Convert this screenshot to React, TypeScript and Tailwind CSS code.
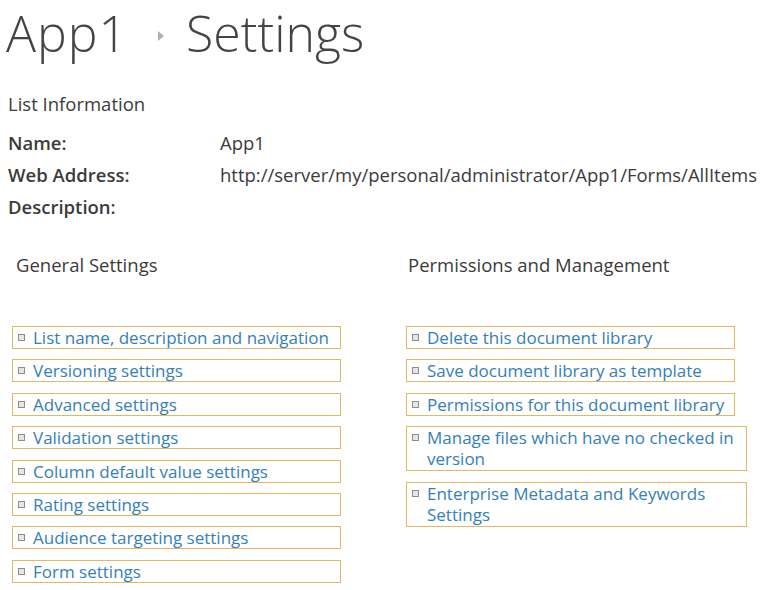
import React from 'react'

const general = [
  'List name, description and navigation',
  'Versioning settings',
  'Advanced settings',
  'Validation settings',
  'Column default value settings',
  'Rating settings',
  'Audience targeting settings',
  'Form settings',
]

const permissions: { text: string; wide?: boolean }[] = [
  { text: 'Delete this document library' },
  { text: 'Save document library as template' },
  { text: 'Permissions for this document library' },
  { text: 'Manage files which have no checked in version', wide: true },
  { text: 'Enterprise Metadata and Keywords Settings', wide: true },
]

const LinkBox: React.FC<{ text: string; className: string }> = ({ text, className }) => (
  <a
    href="#"
    className={`flex items-start border border-[#e2b865] pl-[5px] pr-1 text-[17px] leading-[21px] text-[#3580b8] ${className}`}
  >
    <span className="mt-[7px] mr-[8px] h-[7px] w-[7px] shrink-0 border border-[#8d8d8d] bg-[#e6e6e6]" />
    <span>{text}</span>
  </a>
)

export default function App() {
  return (
    <div className="h-[590px] w-[768px] overflow-hidden bg-white text-[#3b3b3b] font-['Open_Sans','Noto_Sans',sans-serif]">
      <div className="flex items-center pl-[6px] pt-[2px] text-[50px] font-light leading-[62px] text-[#444]">
        <span className="tracking-[1px]">App1</span>
        <span className="ml-[30px] mr-[22px] mt-[6px] h-0 w-0 border-y-[5px] border-l-[6px] border-y-transparent border-l-[#b0b0b0]" />
        <span>Settings</span>
      </div>

      <div className="mt-[30px] pl-[8px] text-[18.5px] leading-[32px]">
        <div className="leading-[20px]">List Information</div>
        <div className="mt-[13px] grid grid-cols-[212px_1fr]">
          <div className="font-semibold">Name:</div>
          <div>App1</div>
          <div className="font-semibold">Web Address:</div>
          <div className="whitespace-nowrap">http://server/my/personal/administrator/App1/Forms/AllItems</div>
          <div className="font-semibold">Description:</div>
          <div />
        </div>
      </div>

      <div className="mt-[31px] flex">
        <div className="w-[406px] shrink-0 pl-[12px]">
          <div className="pl-[4px] text-[18.5px] leading-[22px]">General Settings</div>
          <div className="mt-[50px] flex flex-col gap-[10.4px]">
            {general.map((g) => (
              <LinkBox key={g} text={g} className="h-[23px] w-[329px]" />
            ))}
          </div>
        </div>
        <div>
          <div className="pl-[2px] text-[18.5px] leading-[22px]">Permissions and Management</div>
          <div className="mt-[50px] flex flex-col gap-[10.4px]">
            {permissions.map((p) => (
              <LinkBox
                key={p.text}
                text={p.text}
                className={p.wide ? 'w-[341px] pb-[1px]' : 'h-[23px] w-[329px]'}
              />
            ))}
          </div>
        </div>
      </div>
    </div>
  )
}
